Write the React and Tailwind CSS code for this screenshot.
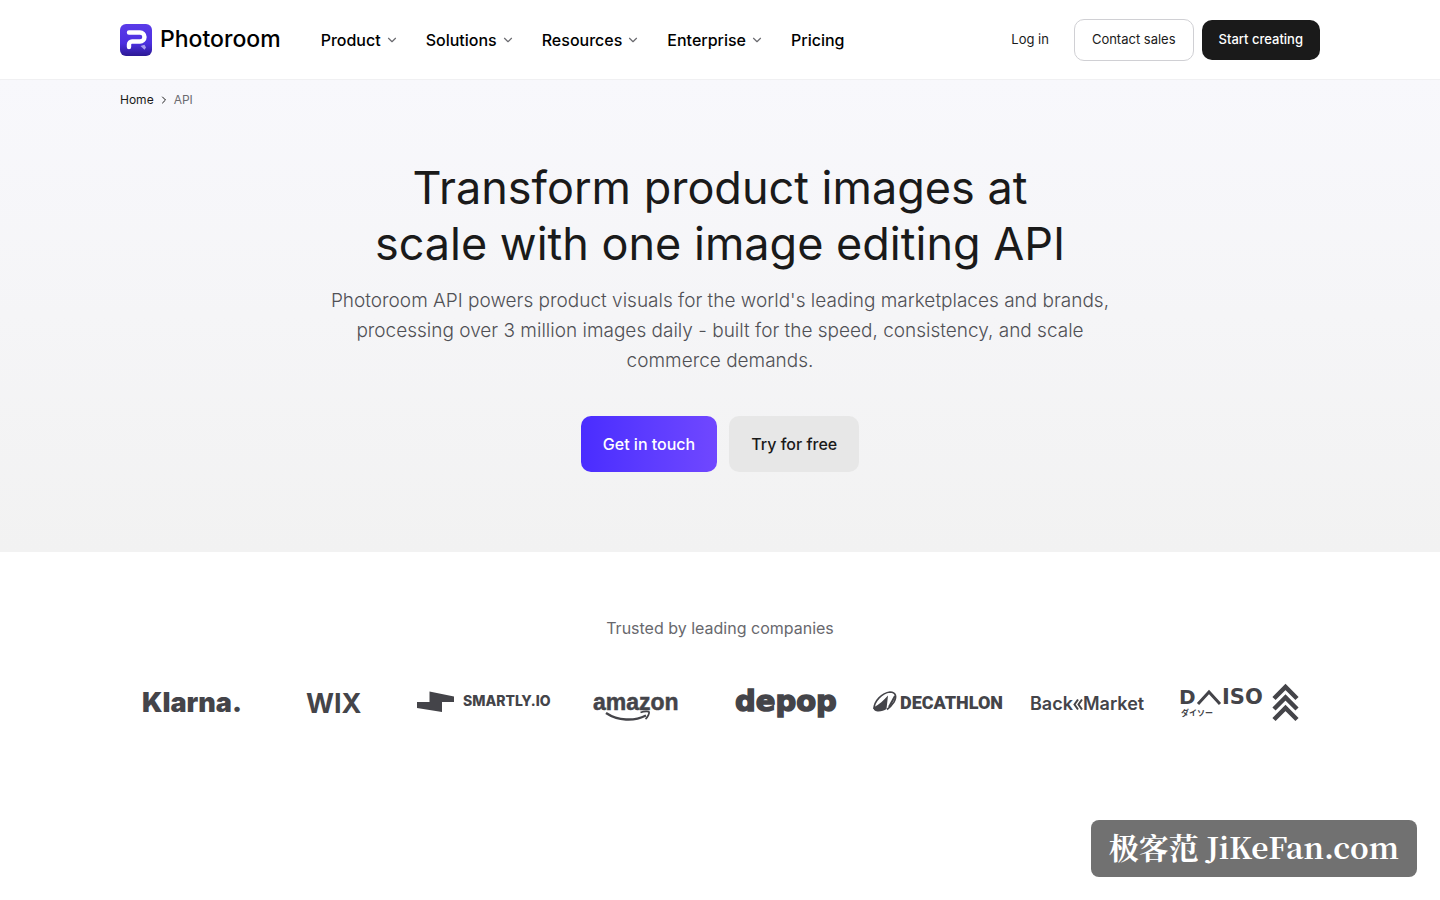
import { ChevronDown, ChevronRight } from 'lucide-react'

const NAV = [
  { label: 'Product', menu: true },
  { label: 'Solutions', menu: true },
  { label: 'Resources', menu: true },
  { label: 'Enterprise', menu: true },
  { label: 'Pricing', menu: false },
]

function PhotoroomMark() {
  return (
    <svg viewBox="0 0 32 32" className="size-8" aria-hidden="true">
      <defs>
        <linearGradient id="mark" x1="0" y1="0" x2="0" y2="1">
          <stop offset="0" stopColor="#5a3be8" />
          <stop offset="0.6" stopColor="#4c2fe0" />
          <stop offset="1" stopColor="#2c1994" />
        </linearGradient>
      </defs>
      <rect width="32" height="32" rx="6" fill="url(#mark)" />
      <path d="M9 8.500H20a4.500 4.500 0 0 1 0 9H12a3 3 0 0 0-3 3v2.500" fill="none" stroke="#fff" strokeWidth="4.400" strokeLinecap="round" strokeLinejoin="round" />
      <path d="M20.500 22l4-1.200 1.500 2.700-1.500 2.200z" fill="#a99df0" />
    </svg>
  )
}

// 로고 한 칸 = 150 x 48
function Logo({ label, children }) {
  return (
    <li>
      <svg viewBox="0 0 150 48" className="block w-full overflow-visible" fill="#444449" role="img" aria-label={label}>
        {children}
      </svg>
    </li>
  )
}

function Logos() {
  return (
    <ul className="grid grid-cols-4 lg:grid-cols-8 mt-[38px]">
      <Logo label="Klarna">
        <text x="22" y="34" fontFamily="Inter, sans-serif" fontWeight="900" fontSize="27">Klarna.</text>
      </Logo>
      <Logo label="Wix">
        <text x="36" y="35" fontFamily="Inter, sans-serif" fontWeight="700" fontSize="27">WIX</text>
      </Logo>
      <Logo label="Smartly.io">
        <path d="M9.500 13.500L34 18.500v5.500H22v10L-3 30v-6H9.500z" />
        <text x="43" y="28" fontFamily="Inter, sans-serif" fontWeight="800" fontSize="14">SMARTLY.IO</text>
      </Logo>
      <Logo label="Amazon">
        <text x="23" y="32" fontFamily="'Liberation Sans', sans-serif" fontWeight="700" fontSize="23" stroke="#444449" strokeWidth="0.500">amazon</text>
        <path d="M36 35c12 8 28 8.500 40 2.500" fill="none" stroke="#444449" strokeWidth="2.400" />
        <path d="M70.500 34.500c4-1.500 8-1.500 8.500-.5s-1 5-3.500 7" fill="none" stroke="#444449" strokeWidth="1.800" />
      </Logo>
      <Logo label="Depop">
        <text x="15" y="33" fontFamily="'DejaVu Sans', sans-serif" fontWeight="700" fontSize="29" stroke="#444449" strokeWidth="1.500">depop</text>
      </Logo>
      <Logo label="Decathlon">
        <path d="M4 31c0-8 8-16 16-17 6 0 7 5 4 10-2 3-4 5.500-7 7.500" fill="none" stroke="#444449" strokeWidth="1.600" />
        <path d="M3.500 29.500c6-3 10-7 14.500-12L16.500 31c-4 3-13.500 4-13-1.500z" />
        <path d="M19 29l6-11" stroke="#444449" strokeWidth="2" />
        <text x="30" y="31" fontFamily="Roboto, sans-serif" fontWeight="900" fontSize="18">DECATHLON</text>
      </Logo>
      <Logo label="Back Market">
        <text x="10" y="32" fontFamily="Inter, sans-serif" fontWeight="600" fontSize="18">Back</text>
        <path d="M58 21.500l-3.500 5 3.500 5M62 21.500l-3.500 5 3.500 5" fill="none" stroke="#444449" strokeWidth="2" />
        <text x="63" y="32" fontFamily="Inter, sans-serif" fontWeight="600" fontSize="18">Market</text>
      </Logo>
      <Logo label="Daiso">
        <text x="9" y="26" fontFamily="'DejaVu Sans', sans-serif" fontWeight="700" fontSize="20">D</text>
        <path d="M28 26L39 14 50 26" fill="none" stroke="#444449" strokeWidth="3" />
        <text x="52" y="26" fontFamily="'DejaVu Sans', sans-serif" fontWeight="700" fontSize="21">ISO</text>
        <text x="11" y="38" fontFamily="'Noto Sans CJK JP', sans-serif" fontWeight="700" fontSize="8">ダイソー</text>
        <path d="M104 20.500L115.500 9 127 20.500M104 31L115.500 19.500 127 31M104 41.500L115.500 30 127 41.500" fill="none" stroke="#444449" strokeWidth="4.500" />
      </Logo>
    </ul>
  )
}

export default function App() {
  return (
    <div className="min-h-screen bg-white text-[#1a1a1a] font-['Inter',sans-serif]">
      <header className="border-b border-[#f0f0f2]">
        <div className="max-w-[1200px] mx-auto h-[79px] flex items-center">
          <a href="#" className="flex items-center gap-2 text-black text-[23px] font-medium">
            <PhotoroomMark />
            Photoroom
          </a>
          <nav className="flex items-center gap-[27px] ml-10 text-black">
            {NAV.map(n => n.menu ? (
              <button key={n.label} type="button" className="flex items-center gap-1 font-medium">
                {n.label}
                <ChevronDown className="size-3.5 text-[#6b6b70]" />
              </button>
            ) : (
              <a key={n.label} href="#" className="font-medium">{n.label}</a>
            ))}
          </nav>
          <div className="flex items-center gap-2 ml-auto text-[13px]">
            <a href="#" className="px-[17px]">Log in</a>
            <a href="#" className="h-[42px] px-[17px] flex items-center border border-[#d0d0d4] rounded-[10px]">Contact sales</a>
            <a href="#" className="h-10 px-[17px] flex items-center bg-[#1a1a1a] text-white font-medium rounded-[10px]">Start creating</a>
          </div>
        </div>
      </header>

      <section className="bg-linear-to-b from-[#f8f8fc] to-[#f2f2f2] pb-20">
        <div className="max-w-[1200px] mx-auto">
          <nav aria-label="Breadcrumb" className="flex items-center gap-1 h-10 text-xs">
            <a href="#">Home</a>
            <ChevronRight className="size-3" />
            <span className="text-[#6b6b70]">API</span>
          </nav>
          <div className="flex flex-col items-center text-center pt-10">
            <h1 className="text-[45px] leading-[56px] font-normal">
              Transform product images at<br />scale with one image editing API
            </h1>
            <p className="max-w-[800px] mt-[14px] text-[19px] leading-[30px] font-light text-[#505055]">
              Photoroom API powers product visuals for the world's leading marketplaces and brands,
              processing over 3 million images daily - built for the speed, consistency, and scale
              commerce demands.
            </p>
            <div className="flex gap-3 mt-10">
              <a href="#" className="h-14 px-[22px] flex items-center rounded-[10px] bg-linear-to-r from-[#4a2cff] to-[#7047ff] text-white font-medium">Get in touch</a>
              <a href="#" className="h-14 px-[22px] flex items-center rounded-[10px] bg-[#e7e7e7] font-medium">Try for free</a>
            </div>
          </div>
        </div>
      </section>

      <section className="max-w-[1200px] mx-auto pt-16">
        <h2 className="text-center text-[#68686d]">Trusted by leading companies</h2>
        <Logos />
      </section>

      <div className="fixed right-[23px] bottom-[23px] h-[57px] px-[18px] pb-1 flex items-center rounded-lg bg-[#717171] text-white text-[30px] font-bold font-['Noto_Serif_CJK_SC','Noto_Serif',serif]">
        极客范 JiKeFan.com
      </div>
    </div>
  )
}
